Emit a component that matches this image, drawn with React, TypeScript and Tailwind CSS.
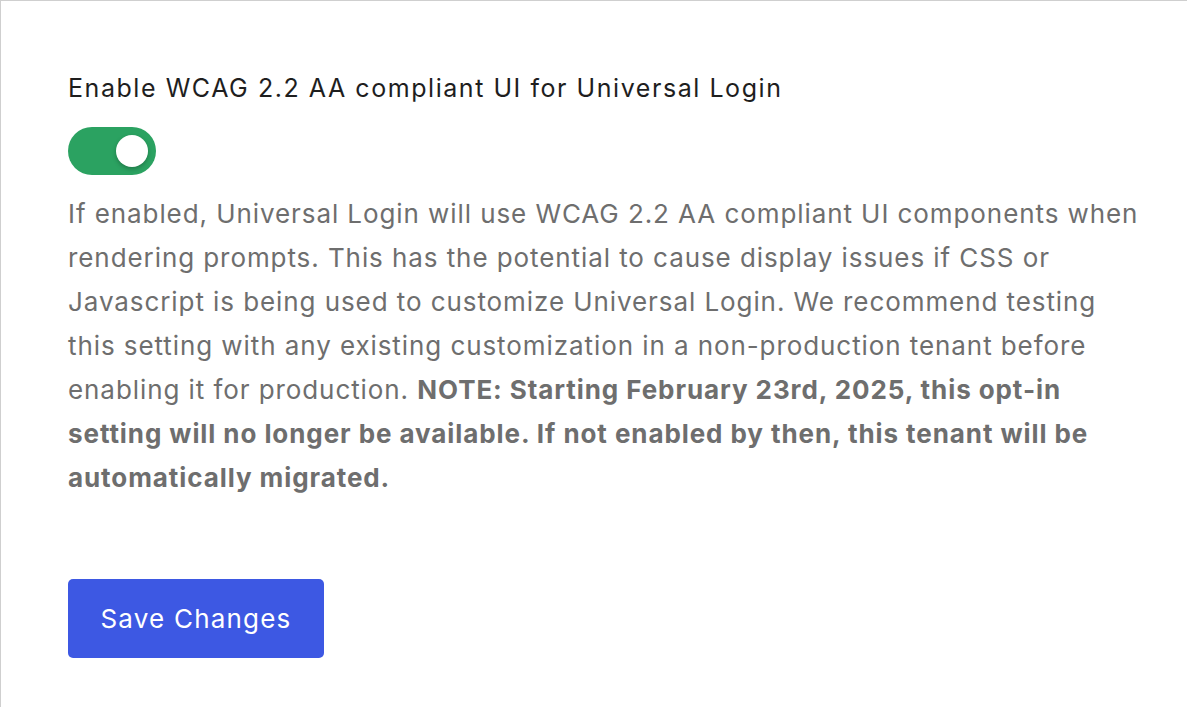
export default function App() {
  return (
    <div className="min-h-screen w-full bg-white border-t border-l border-[#cfcfcf] font-['Inter','Liberation_Sans',sans-serif]">
      <div className="pl-[67px] pt-[71px] w-[1143px]">
        <h1 className="text-[25px] leading-8 font-normal tracking-[1.55px] text-[#1e1e1e]">
          Enable WCAG 2.2 AA compliant UI for Universal Login
        </h1>
        <div className="mt-[23px]">
          <button
            role="switch"
            aria-checked="true"
            className="relative flex items-center justify-end w-[88px] h-[48px] rounded-full bg-[#2ba261] pr-[8px]"
          >
            <span className="block w-[32px] h-[32px] rounded-full bg-white shadow-[0_2px_4px_rgba(0,0,0,0.25)]" />
          </button>
        </div>
        <p className="mt-[17px] text-[26px] leading-[44px] tracking-[0.92px] text-[#6e6e6e]">
          If enabled, Universal Login will use WCAG 2.2 AA compliant UI components
          when rendering prompts. This has the potential to cause display issues if
          CSS or Javascript is being used to customize Universal Login. We recommend
          testing this setting with any existing customization in a non-production
          tenant before enabling it for production.{" "}
          <strong className="font-bold">
            NOTE: Starting February 23rd, 2025, this opt-in setting will no longer be
            available. If not enabled by then, this tenant will be automatically
            migrated.
          </strong>
        </p>
        <button className="mt-[79px] w-[256px] h-[79px] rounded-[5px] bg-[#3d58e3] text-white text-[26px] tracking-[1.2px]">
          Save Changes
        </button>
      </div>
    </div>
  );
}
